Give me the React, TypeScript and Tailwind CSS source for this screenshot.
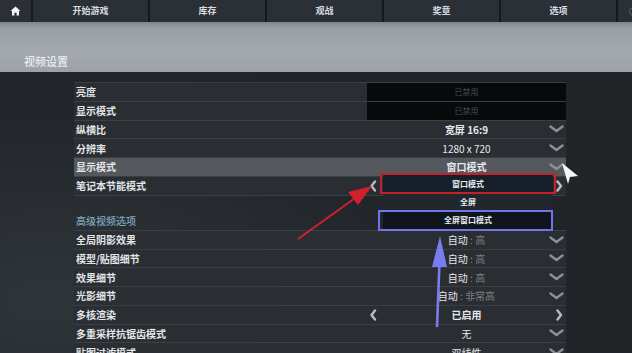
import React from "react";

const font = { fontFamily: '"Noto Sans CJK SC", "Noto Sans", sans-serif' };

type Row = {
  label: string;
  kind: "disabled" | "select" | "toggle" | "none";
  value?: React.ReactNode;
  active?: boolean;
};

const tabs = ["开始游戏", "库存", "观战", "奖章", "选项"];

function ChevronDown() {
  return (
    <svg className="absolute right-[2px] top-1/2 -translate-y-1/2" width="15" height="8" viewBox="0 0 15 8">
      <polyline points="1.5,1.5 7.5,6 13.5,1.5" fill="none" stroke="#8b9095" strokeWidth="2.4" strokeLinecap="round" strokeLinejoin="round" />
    </svg>
  );
}

function Arrow({ dir }: { dir: "left" | "right" }) {
  const pts = dir === "left" ? "5,1.5 1.5,6 5,10.5" : "1.5,1.5 5,6 1.5,10.5";
  return (
    <svg width="7" height="12" viewBox="0 0 7 12">
      <polyline points={pts} fill="none" stroke="#b9bdc1" strokeWidth="2.4" strokeLinecap="round" strokeLinejoin="round" />
    </svg>
  );
}

function Auto({ rest }: { rest: string }) {
  return (
    <span>
      <span className="text-[#e4e7ea]">自动</span>
      <span className="text-[#7c8186]"> : {rest}</span>
    </span>
  );
}

const basicRows: Row[] = [
  { label: "亮度", kind: "disabled" },
  { label: "显示模式", kind: "disabled" },
  { label: "纵横比", kind: "select", value: <span className="font-semibold">宽屏 16:9</span> },
  { label: "分辨率", kind: "select", value: "1280 x 720" },
  { label: "显示模式", kind: "select", value: <span className="font-semibold">窗口模式</span>, active: true },
  { label: "笔记本节能模式", kind: "toggle", value: "" },
];

const advancedRows: Row[] = [
  { label: "全局阴影效果", kind: "select", value: <Auto rest="高" /> },
  { label: "模型/贴图细节", kind: "select", value: <Auto rest="高" /> },
  { label: "效果细节", kind: "select", value: <Auto rest="高" /> },
  { label: "光影细节", kind: "select", value: <Auto rest="非常高" /> },
  { label: "多核渲染", kind: "toggle", value: "已启用" },
  { label: "多重采样抗锯齿模式", kind: "select", value: "无" },
  { label: "贴图过滤模式", kind: "select", value: "双线性" },
];

function SettingRow({ row }: { row: Row }) {
  return (
    <div
      className={`flex h-[18.75px] items-center border-t border-[#3a3f44] ${row.active ? "bg-[#55595e]" : "bg-[#2b2f33]/90"}`}
    >
      <span className="flex-1 pl-[2px] text-[10px] font-semibold text-[#e2e5e8]">{row.label}</span>
      <div className="relative flex h-full w-[199px] items-center justify-center text-[10px] text-[#e4e7ea]">
        {row.kind === "disabled" && (
          <div className="flex h-full w-full items-center justify-center bg-[#08090a] text-[8px] text-[#4a4e52]">已禁用</div>
        )}
        {row.kind === "select" && (
          <>
            <span>{row.value}</span>
            <ChevronDown />
          </>
        )}
        {row.kind === "toggle" && (
          <div className="flex w-full items-center justify-between px-[3px]">
            <Arrow dir="left" />
            <span className="font-semibold">{row.value}</span>
            <Arrow dir="right" />
          </div>
        )}
      </div>
    </div>
  );
}

export default function App() {
  return (
    <div
      className="relative h-[353px] w-[632px] overflow-hidden bg-[radial-gradient(ellipse_at_8%_85%,#30353a_0%,#22262a_45%,#1f2326_100%)]"
      style={font}
    >
      {/* top navigation */}
      <div className="flex h-[22px] bg-[#2b3036] text-[9px] font-bold text-[#d9dde0]">
        <div className="flex w-[33px] items-center justify-center border-r-2 border-[#171a1d]">
          <svg width="11" height="10" viewBox="0 0 11 10">
            <path d="M5.5 0.5 L10.5 5 L9 5 L9 9.5 L6.6 9.5 L6.6 6.8 L4.4 6.8 L4.4 9.5 L2 9.5 L2 5 L0.5 5 Z" fill="#f2f4f5" />
          </svg>
        </div>
        {tabs.map((t) => (
          <div className="flex w-[117px] items-center justify-center border-r-2 border-[#171a1d]" key={t}>
            {t}
          </div>
        ))}
        <div className="flex flex-1 items-center justify-end">
          <div className="mr-[-6px] h-[9px] w-[9px] rounded-full border border-[#5d6368]" />
        </div>
      </div>

      {/* header band */}
      <div className="flex h-[50px] items-end bg-[linear-gradient(180deg,#7f858a_0%,#9aa0a5_12%,#a3a9ae_60%,#9ca2a7_100%)] pb-[3px] pl-[24px]">
        <span className="text-[11px] font-medium text-[#e9ecee]">视频设置</span>
      </div>

      {/* settings list */}
      <div className="ml-[74px] mt-[10px] w-[492px]">
        {basicRows.map((r, i) => (
          <SettingRow key={`b${i}`} row={r} />
        ))}
        <div className="h-[16.5px] border-t border-[#3a3f44]" />
        <div className="flex h-[18.75px] items-center pl-[2px] text-[10px] font-medium text-[#7ea6bd]">高级视频选项</div>
        {advancedRows.map((r, i) => (
          <SettingRow key={`a${i}`} row={r} />
        ))}
      </div>

      {/* open dropdown */}
      <div className="absolute left-[383px] top-[175px] flex w-[170px] flex-col bg-[#20272d] text-[8px] font-semibold text-[#e6e9ec]">
        <div className="flex h-[18px] items-center justify-center bg-[#17202a]">窗口模式</div>
        <div className="flex h-[18px] items-center justify-center">全屏</div>
        <div className="flex h-[18px] items-center justify-center bg-[#0f151b]">全屏窗口模式</div>
      </div>

      {/* annotation boxes */}
      <div className="absolute left-[380px] top-[173px] h-[21px] w-[176px] border-2 border-[#c4212c]" />
      <div className="absolute left-[378px] top-[210px] h-[21px] w-[175px] border-2 border-[#7474ea]" />

      {/* annotation arrows and cursor */}
      <svg className="pointer-events-none absolute left-0 top-0" width="632" height="353" viewBox="0 0 632 353">
        <line x1="298" y1="239" x2="358" y2="196" stroke="#d0212c" strokeWidth="2" />
        <polygon points="372,186 348,192 358,205" fill="#d0212c" />
        <line x1="437" y1="327" x2="439.5" y2="262" stroke="#7b7bf0" strokeWidth="2.6" />
        <polygon points="440,236 432,267 447,267" fill="#7b7bf0" />
        <polygon points="562,163 578,176 570,177 568,184" fill="#f4f5f6" />
      </svg>
    </div>
  );
}
